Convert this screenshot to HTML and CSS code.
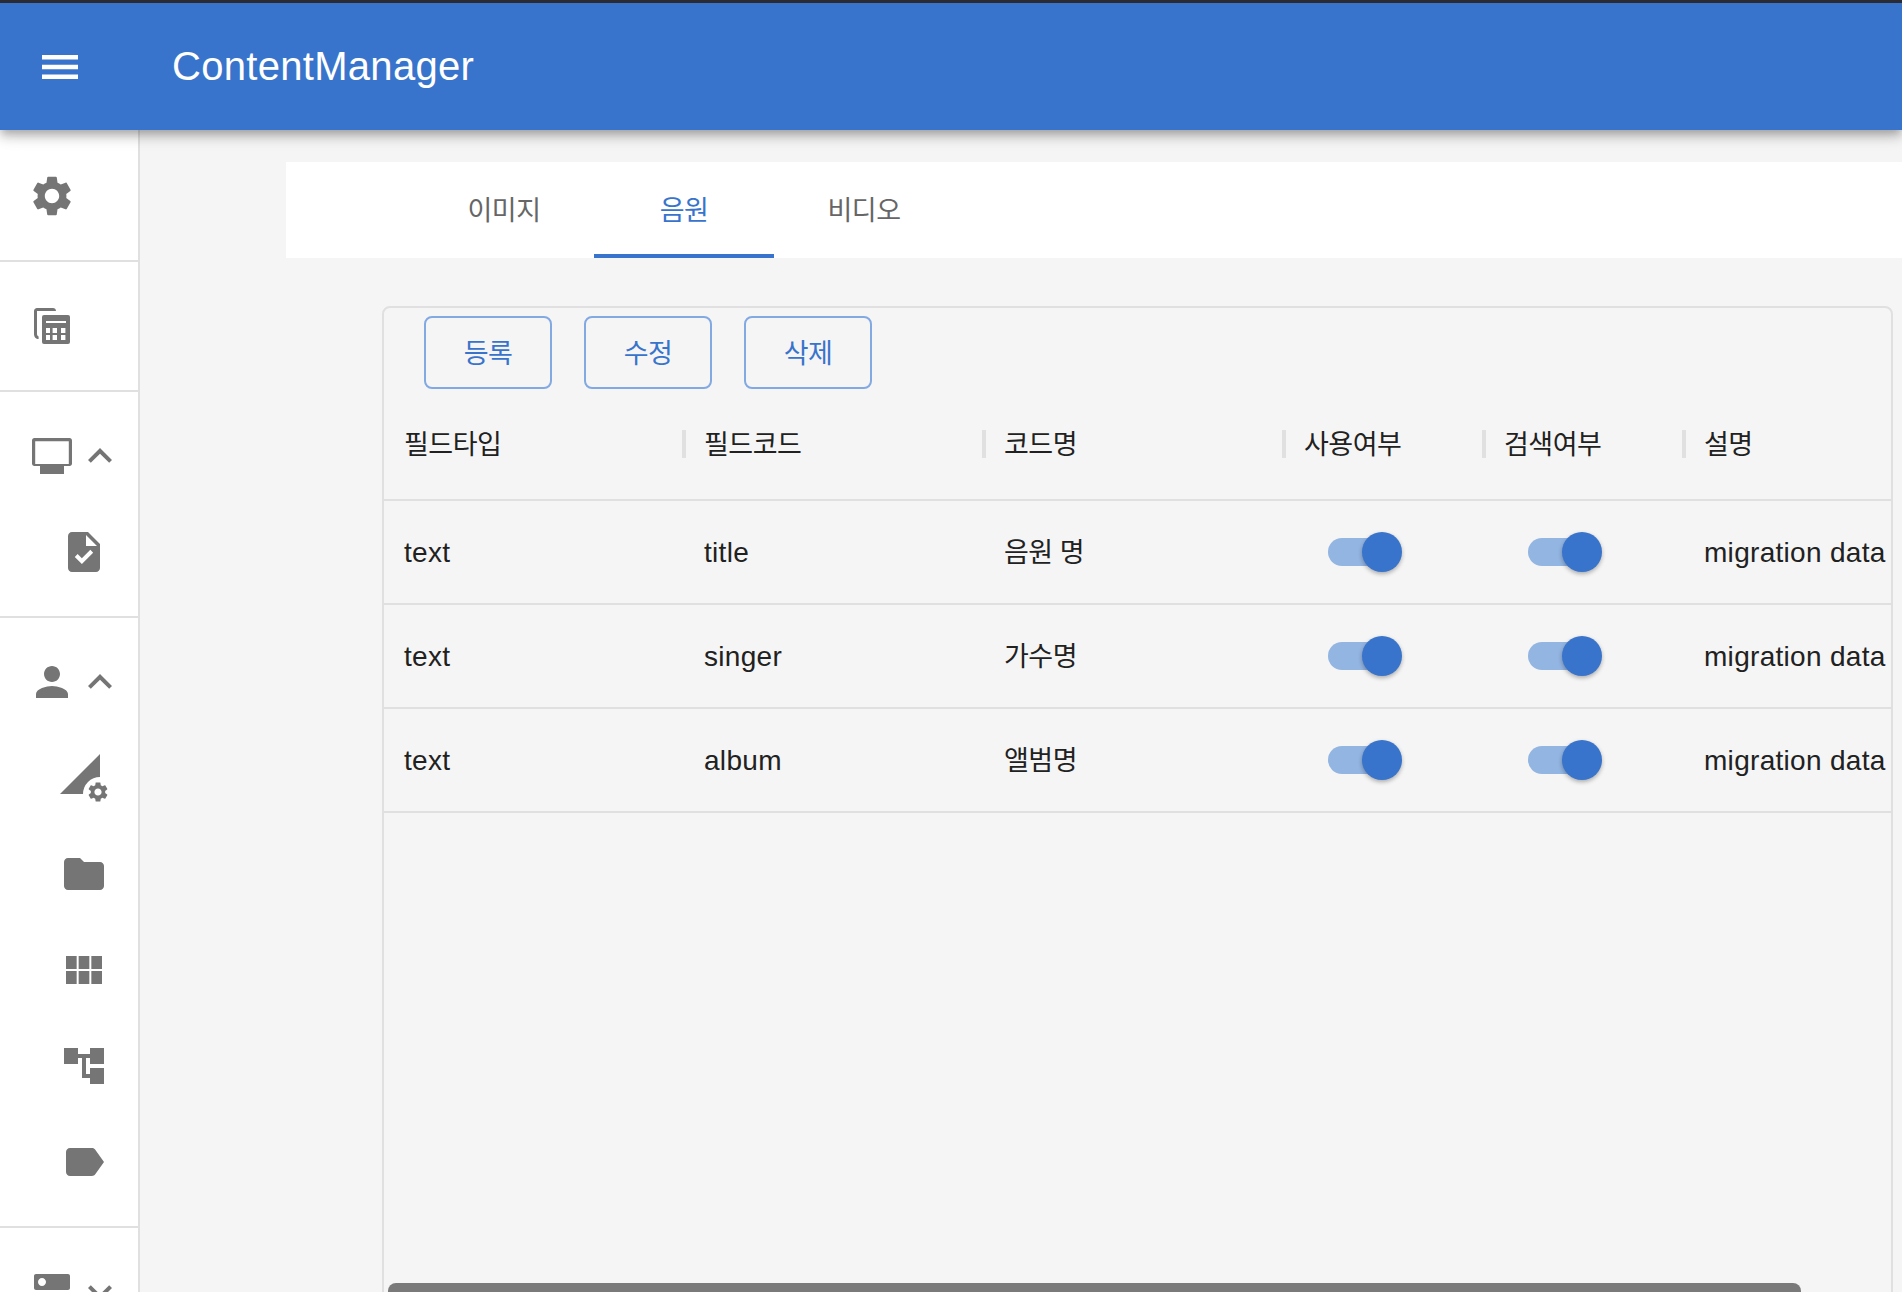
FILE: index.html
```html
<!DOCTYPE html>
<html lang="ko">
<head>
<meta charset="UTF-8" />
<title>ContentManager</title>
<link rel="stylesheet" href="styles.css">
</head>
<body>

<header class="topbar">
  <svg class="icon icon-white" viewBox="0 0 24 24"><path d="M3 18h18v-2.200H3V18zm0-4.900h18v-2.200H3v2.200zM3 6v2.200h18V6H3z"/></svg>
  <h1 class="app-title">ContentManager</h1>
</header>

<div class="layout">
  <nav class="sidebar">
    <div class="nav-section">
      <div class="nav-row">
        <svg class="icon" viewBox="0 0 24 24"><path d="M19.14 12.94c.04-.3.06-.61.06-.94 0-.32-.02-.64-.07-.94l2.03-1.58c.18-.14.23-.41.12-.61l-1.92-3.32c-.12-.22-.37-.29-.59-.22l-2.39.96c-.5-.38-1.03-.7-1.62-.94l-.36-2.54c-.04-.24-.24-.41-.48-.41h-3.84c-.24 0-.43.17-.47.41l-.36 2.54c-.59.24-1.13.57-1.62.94l-2.39-.96c-.22-.08-.47 0-.59.22L2.74 8.87c-.12.21-.08.47.12.61l2.03 1.58c-.05.3-.09.63-.09.94s.02.64.07.94l-2.03 1.58c-.18.14-.23.41-.12.61l1.92 3.32c.12.22.37.29.59.22l2.39-.96c.5.38 1.03.7 1.62.94l.36 2.54c.05.24.24.41.48.41h3.84c.24 0 .44-.17.47-.41l.36-2.54c.59-.24 1.13-.56 1.62-.94l2.39.96c.22.08.47 0 .59-.22l1.92-3.32c.12-.22.07-.47-.12-.61l-2.01-1.58zM12 15.600c-1.980 0-3.600-1.620-3.600-3.600s1.620-3.600 3.600-3.600 3.600 1.620 3.600 3.600-1.620 3.600-3.600 3.600z"/></svg>
      </div>
    </div>
    <div class="nav-section">
      <div class="nav-row">
        <svg class="icon" viewBox="0 0 24 24">
          <path d="M4.500 3h8c.8 0 1.500.6 1.500 1.500H4.500v11.500c0 .6.300 1 .8 1.200v1.300C4 18.500 3 17.500 3 16V4.500C3 3.700 3.700 3 4.500 3z"/>
          <rect x="7" y="6.500" width="14" height="14.500" rx="1"/>
          <rect x="9" y="9.500" width="10" height="1" fill="#fff"/>
          <rect x="9" y="13" width="2" height="2.500" fill="#fff"/>
          <rect x="12.300" y="13" width="2.200" height="2.500" fill="#fff"/>
          <rect x="16.500" y="13" width="2.200" height="2.500" fill="#fff"/>
          <rect x="9" y="16.500" width="2" height="2.500" fill="#fff"/>
          <rect x="12.300" y="16.500" width="2.200" height="2.500" fill="#fff"/>
          <rect x="16.500" y="16.500" width="2.200" height="2.500" fill="#fff"/>
        </svg>
      </div>
    </div>
    <div class="nav-section">
      <div class="nav-row">
        <svg class="icon" viewBox="0 0 24 24"><path d="M20.800 3H3.200C2.500 3 2 3.500 2 4.200v11.600c0 .7.500 1.200 1.200 1.200H6v4h12v-4h2.800c.7 0 1.200-.5 1.200-1.200V4.200C22 3.500 21.500 3 20.800 3zM20.400 16H3.600V4.600h16.800V16z"/></svg>
        <svg class="icon" viewBox="0 0 24 24"><path d="M12 8l-6 6 1.410 1.410L12 10.830l4.590 4.580L18 14z"/></svg>
      </div>
      <div class="nav-row nav-sub">
        <svg class="icon" viewBox="0 0 24 24"><path d="M14 2H6c-1.100 0-1.990.9-1.990 2L4 20c0 1.100.89 2 1.990 2H18c1.100 0 2-.9 2-2V8l-6-6zm-3.060 16L7.400 14.460l1.410-1.410 2.120 2.120 4.240-4.240 1.410 1.410L10.940 18zM13 9V3.500L18.500 9H13z"/></svg>
      </div>
    </div>
    <div class="nav-section">
      <div class="nav-row">
        <svg class="icon" viewBox="0 0 24 24"><path d="M12 12c2.210 0 4-1.790 4-4s-1.790-4-4-4-4 1.790-4 4 1.790 4 4 4zm0 2c-2.670 0-8 1.340-8 4v2h16v-2c0-2.660-5.330-4-8-4z"/></svg>
        <svg class="icon" viewBox="0 0 24 24"><path d="M12 8l-6 6 1.410 1.410L12 10.830l4.590 4.580L18 14z"/></svg>
      </div>
      <div class="nav-row nav-sub">
        <svg class="icon" viewBox="0 0 24 24">
          <path d="M0 20L20 0v11.500a8.500 8.500 0 0 0-8.500 8.500z"/>
          <path transform="translate(19 19) scale(.5) translate(-12 -12)" d="M19.14 12.94c.04-.3.06-.61.06-.94 0-.32-.02-.64-.07-.94l2.03-1.58c.18-.14.23-.41.12-.61l-1.92-3.32c-.12-.22-.37-.29-.59-.22l-2.39.96c-.5-.38-1.03-.7-1.62-.94l-.36-2.54c-.04-.24-.24-.41-.48-.41h-3.84c-.24 0-.43.17-.47.41l-.36 2.54c-.59.24-1.13.57-1.62.94l-2.39-.96c-.22-.08-.47 0-.59.22L2.74 8.87c-.12.21-.08.47.12.61l2.03 1.58c-.05.3-.09.63-.09.94s.02.64.07.94l-2.03 1.58c-.18.14-.23.41-.12.61l1.92 3.32c.12.22.37.29.59.22l2.39-.96c.5.38 1.03.7 1.62.94l.36 2.54c.05.24.24.41.48.41h3.84c.24 0 .44-.17.47-.41l.36-2.54c.59-.24 1.13-.56 1.62-.94l2.39.96c.22.08.47 0 .59-.22l1.92-3.32c.12-.22.07-.47-.12-.61l-2.01-1.58zM12 15.600c-1.980 0-3.600-1.620-3.600-3.600s1.620-3.600 3.600-3.600 3.600 1.620 3.600 3.600-1.620 3.600-3.600 3.600z"/>
        </svg>
      </div>
      <div class="nav-row nav-sub">
        <svg class="icon" viewBox="0 0 24 24"><path d="M10 4H4c-1.100 0-1.990.9-1.990 2L2 18c0 1.100.9 2 2 2h16c1.100 0 2-.9 2-2V8c0-1.100-.9-2-2-2h-8l-2-2z"/></svg>
      </div>
      <div class="nav-row nav-sub">
        <svg class="icon" viewBox="0 0 24 24"><path d="M14.670 5v6.500H9.330V5h5.340zm1 6.500H21V5h-5.330v6.500zm-1 7.500v-6.500H9.330V19h5.340zm1-6.500V19H21v-6.500h-5.330zm-7.340 0H3V19h5.330v-6.500zm0-1V5H3v6.500h5.330z"/></svg>
      </div>
      <div class="nav-row nav-sub">
        <svg class="icon" viewBox="0 0 24 24"><path d="M22 11V3h-7v3H9V3H2v8h7V8h2v10h4v3h7v-8h-7v3h-2V8h2v3z"/></svg>
      </div>
      <div class="nav-row nav-sub">
        <svg class="icon" viewBox="0 0 24 24"><path d="M17.630 5.840C17.270 5.330 16.670 5 16 5L5 5.010C3.900 5.010 3 5.900 3 7v10c0 1.100.9 1.990 2 1.990L16 19c.67 0 1.270-.33 1.630-.84L22 12l-4.370-6.160z"/></svg>
      </div>
    </div>
    <div class="nav-section">
      <div class="nav-row">
        <svg class="icon" viewBox="0 0 24 24"><path d="M20 13H4c-.55 0-1 .45-1 1v6c0 .55.45 1 1 1h16c.55 0 1-.45 1-1v-6c0-.55-.45-1-1-1zM7 19c-1.100 0-2-.9-2-2s.9-2 2-2 2 .9 2 2-.9 2-2 2zM20 3H4c-.55 0-1 .45-1 1v6c0 .55.45 1 1 1h16c.55 0 1-.45 1-1V4c0-.55-.45-1-1-1zM7 9C5.900 9 5 8.100 5 7s.9-2 2-2 2 .9 2 2-.9 2-2 2z"/></svg>
        <svg class="icon" viewBox="0 0 24 24"><path d="M16.590 8.590L12 13.170 7.410 8.590 6 10l6 6 6-6z"/></svg>
      </div>
    </div>
  </nav>

  <main class="content">
    <div class="tabs">
      <div class="tab ko">이미지</div>
      <div class="tab tab-active ko">음원</div>
      <div class="tab ko">비디오</div>
    </div>

    <section class="panel">
      <div class="actions">
        <button type="button" class="btn ko">등록</button>
        <button type="button" class="btn ko">수정</button>
        <button type="button" class="btn ko">삭제</button>
      </div>

      <div class="grid-row grid-head">
        <div class="head-first"><span class="ko">필드타입</span></div>
        <div class="head-cell"><i class="sep"></i><span class="ko">필드코드</span></div>
        <div class="head-cell"><i class="sep"></i><span class="ko">코드명</span></div>
        <div class="head-cell"><i class="sep"></i><span class="ko">사용여부</span></div>
        <div class="head-cell"><i class="sep"></i><span class="ko">검색여부</span></div>
        <div class="head-cell"><i class="sep"></i><span class="ko">설명</span></div>
      </div>

      <div class="grid-row">
        <div class="cell-first">text</div>
        <div class="cell">title</div>
        <div class="cell-ko ko">음원 명</div>
        <div class="cell-switch"><span class="toggle"><span class="thumb"></span></span></div>
        <div class="cell-switch"><span class="toggle"><span class="thumb"></span></span></div>
        <div class="cell">migration data</div>
      </div>
      <div class="grid-row">
        <div class="cell-first">text</div>
        <div class="cell">singer</div>
        <div class="cell-ko ko">가수명</div>
        <div class="cell-switch"><span class="toggle"><span class="thumb"></span></span></div>
        <div class="cell-switch"><span class="toggle"><span class="thumb"></span></span></div>
        <div class="cell">migration data</div>
      </div>
      <div class="grid-row">
        <div class="cell-first">text</div>
        <div class="cell">album</div>
        <div class="cell-ko ko">앨범명</div>
        <div class="cell-switch"><span class="toggle"><span class="thumb"></span></span></div>
        <div class="cell-switch"><span class="toggle"><span class="thumb"></span></span></div>
        <div class="cell">migration data</div>
      </div>

      <div class="scroll-thumb"></div>
    </section>
  </main>
</div>

</body>
</html>
```

FILE: styles.css
```css
body { margin: 0; height: 100vh; overflow: hidden; display: flex; flex-direction: column; font-family: "Liberation Sans", "Noto Sans CJK KR", sans-serif; font-size: 28px; letter-spacing: .3px; color: #212121; background-color: #f5f5f5; }

.ko { font-family: "Noto Sans CJK KR", "Liberation Sans", sans-serif; font-size: 27px; font-weight: 400; letter-spacing: -.5px; }

.icon { width: 48px; height: 48px; flex: none; fill: #757575; }
.icon-white { fill: #fff; }

.topbar { position: relative; z-index: 2; flex: none; height: 127px; border-top: 3px solid #2a2b33; padding-left: 36px; display: flex; align-items: center; background-color: #3874cb; box-shadow: 0 4px 8px -2px rgba(0,0,0,.2), 0 8px 10px rgba(0,0,0,.14), 0 2px 20px rgba(0,0,0,.12); }
.app-title { margin: 0 0 0 88px; font-size: 40px; font-weight: 400; color: #fff; }

.layout { flex: 1; display: flex; min-height: 0; }

.sidebar { flex: none; width: 138px; padding-top: 2px; overflow: hidden; background-color: #fff; border-right: 2px solid #e0e0e0; }
.nav-section { padding: 16px 0; border-bottom: 2px solid #e0e0e0; }
.nav-row { height: 96px; padding-left: 28px; display: flex; align-items: center; }
.nav-sub { padding-left: 60px; }

.content { flex: 1; min-width: 0; padding: 32px 0 0 146px; overflow: hidden; }

.tabs { height: 96px; padding-left: 128px; display: flex; background-color: #fff; }
.tab { box-sizing: border-box; width: 180px; display: flex; align-items: center; justify-content: center; color: #666; border-bottom: 4px solid transparent; }
.tab-active { color: #3874cb; border-bottom-color: #3874cb; }

.panel { box-sizing: border-box; height: 995px; margin: 48px 9px 0 96px; border: 2px solid #e0e0e0; border-radius: 8px; display: flex; flex-direction: column; }

.actions { display: flex; gap: 32px; padding: 8px 0 0 40px; }
.btn { width: 128px; height: 73px; padding: 0 0 3px; border: 2px solid #82a9e2; border-radius: 8px; background: none; color: #3874cb; }

.grid-row { display: grid; grid-template-columns: 298px 300px 300px 200px 200px 1fr; align-items: center; height: 102px; border-bottom: 2px solid #e0e0e0; }
.grid-head { height: 110px; }
.head-first { display: flex; padding: 0 0 3px 20px; }
.head-cell { display: flex; align-items: center; white-space: nowrap; }
.head-cell .ko { padding-bottom: 3px; }
.cell-first { padding: 2px 0 0 20px; }
.cell { padding: 2px 0 0 22px; white-space: nowrap; }
.cell-ko { padding: 0 0 3px 22px; white-space: nowrap; }
.sep { width: 4px; height: 28px; margin-right: 18px; background-color: #e0e0e0; }

.cell-switch { padding-left: 46px; display: flex; }
.toggle { position: relative; width: 68px; height: 28px; border-radius: 14px; background-color: #93b5e2; }
.thumb { position: absolute; top: -6px; right: -6px; width: 40px; height: 40px; border-radius: 50%; background-color: #3874cb; box-shadow: 0 2px 4px rgba(0,0,0,.3); }

.scroll-thumb { flex: none; width: 1413px; height: 16px; margin: auto 0 0 4px; border-radius: 8px 8px 0 0; background-color: #7a7a7a; }
```
